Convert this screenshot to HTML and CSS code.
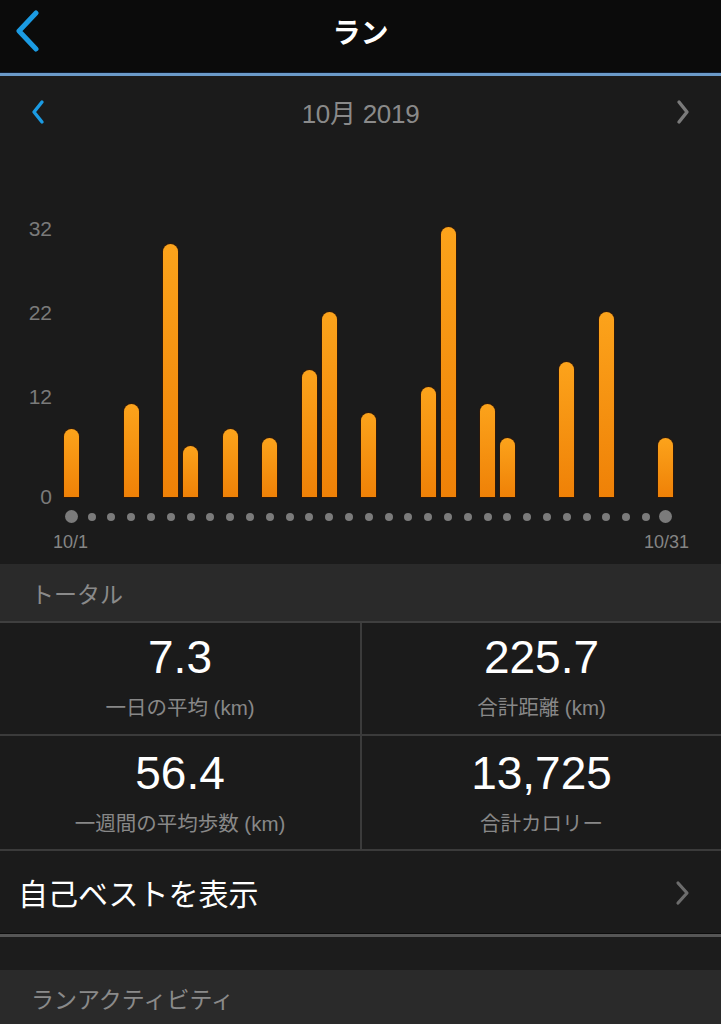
FILE: index.html
```html
<!DOCTYPE html>
<html lang="ja">
<head>
<meta charset="utf-8">
<title>ラン</title>
<link rel="stylesheet" href="styles.css">
</head>
<body>
<div class="app">
  <header class="topbar">
    <svg class="back" width="26" height="42" viewBox="0 0 26 42"><path d="M22 3 L5 21 L22 39" fill="none" stroke="#1b9be3" stroke-width="5" stroke-linecap="round" stroke-linejoin="round"/></svg>
    <h1 class="title">ラン</h1>
  </header>

  <section class="chart-panel">
    <div class="month-nav">
      <svg class="nav-chev" width="16" height="26" viewBox="0 0 16 26"><path d="M12 3 L4 13 L12 23" fill="none" stroke="#1b9be3" stroke-width="3.4" stroke-linecap="round" stroke-linejoin="round"/></svg>
      <span class="month">10月 2019</span>
      <svg class="nav-chev" width="16" height="26" viewBox="0 0 16 26"><path d="M4 3 L12 13 L4 23" fill="none" stroke="#7a7a7a" stroke-width="3.4" stroke-linecap="round" stroke-linejoin="round"/></svg>
    </div>

    <div class="chart">
      <div class="y-axis">
        <span class="y-label" style="bottom:257px">32</span>
        <span class="y-label" style="bottom:173px">22</span>
        <span class="y-label" style="bottom:89px">12</span>
        <span class="y-label" style="bottom:-11px">0</span>
      </div>
      <div class="plot">
        <div class="col"><div class="bar" style="height:68px"></div></div>
        <div class="col"></div>
        <div class="col"></div>
        <div class="col"><div class="bar" style="height:93px"></div></div>
        <div class="col"></div>
        <div class="col"><div class="bar" style="height:253px"></div></div>
        <div class="col"><div class="bar" style="height:51px"></div></div>
        <div class="col"></div>
        <div class="col"><div class="bar" style="height:68px"></div></div>
        <div class="col"></div>
        <div class="col"><div class="bar" style="height:59px"></div></div>
        <div class="col"></div>
        <div class="col"><div class="bar" style="height:127px"></div></div>
        <div class="col"><div class="bar" style="height:185px"></div></div>
        <div class="col"></div>
        <div class="col"><div class="bar" style="height:84px"></div></div>
        <div class="col"></div>
        <div class="col"></div>
        <div class="col"><div class="bar" style="height:110px"></div></div>
        <div class="col"><div class="bar" style="height:270px"></div></div>
        <div class="col"></div>
        <div class="col"><div class="bar" style="height:93px"></div></div>
        <div class="col"><div class="bar" style="height:59px"></div></div>
        <div class="col"></div>
        <div class="col"></div>
        <div class="col"><div class="bar" style="height:135px"></div></div>
        <div class="col"></div>
        <div class="col"><div class="bar" style="height:185px"></div></div>
        <div class="col"></div>
        <div class="col"></div>
        <div class="col"><div class="bar" style="height:59px"></div></div>
      </div>
    </div>

    <div class="dots">
      <span class="dot big"></span><span class="dot"></span><span class="dot"></span><span class="dot"></span><span class="dot"></span><span class="dot"></span><span class="dot"></span><span class="dot"></span><span class="dot"></span><span class="dot"></span><span class="dot"></span><span class="dot"></span><span class="dot"></span><span class="dot"></span><span class="dot"></span><span class="dot"></span><span class="dot"></span><span class="dot"></span><span class="dot"></span><span class="dot"></span><span class="dot"></span><span class="dot"></span><span class="dot"></span><span class="dot"></span><span class="dot"></span><span class="dot"></span><span class="dot"></span><span class="dot"></span><span class="dot"></span><span class="dot"></span><span class="dot big"></span>
    </div>
    <div class="dates">
      <span>10/1</span>
      <span>10/31</span>
    </div>
  </section>

  <div class="section-head">トータル</div>

  <div class="stats">
    <div class="stat">
      <div class="value">7.3</div>
      <div class="label">一日の平均 (km)</div>
    </div>
    <div class="stat">
      <div class="value">225.7</div>
      <div class="label">合計距離 (km)</div>
    </div>
    <div class="stat">
      <div class="value">56.4</div>
      <div class="label">一週間の平均歩数 (km)</div>
    </div>
    <div class="stat">
      <div class="value">13,725</div>
      <div class="label">合計カロリー</div>
    </div>
  </div>

  <div class="link-row">
    <span class="link-text">自己ベストを表示</span>
    <svg class="link-chev" width="18" height="26" viewBox="0 0 18 26"><path d="M5 3 L14 13 L5 23" fill="none" stroke="#6c6c6c" stroke-width="3.2" stroke-linecap="round" stroke-linejoin="round"/></svg>
  </div>

  <div class="spacer"></div>

  <div class="section-head activity">ランアクティビティ</div>
</div>
</body>
</html>
```

FILE: styles.css
```css
* { box-sizing: border-box; }

html, body {
  margin: 0;
  padding: 0;
  background: #1b1b1b;
}

body {
  font-family: "Liberation Sans", "Noto Sans CJK JP", sans-serif;
  color: #fff;
}

.app {
  width: 721px;
  height: 1024px;
  overflow: hidden;
  background: #1b1b1b;
}

/* top bar */
.topbar {
  position: relative;
  height: 76px;
  background: #0b0b0b;
  border-bottom: 3px solid #6b9ac9;
  box-shadow: inset 0 -1px 0 #0e1a2c;
  display: flex;
  align-items: center;
  justify-content: center;
}

.back {
  position: absolute;
  left: 14px;
  top: 10px;
}

.title {
  margin: 0;
  font-family: "Noto Sans CJK JP", sans-serif;
  font-size: 28px;
  font-weight: 700;
  line-height: 1;
  margin-top: -12px;
  color: #fff;
}

/* chart panel */
.chart-panel {
  background: #1b1b1b;
  padding-bottom: 11px;
}

.month-nav {
  height: 74px;
  display: flex;
  align-items: center;
  justify-content: space-between;
  padding: 0 30px 0 30px;
}

.nav-chev {
  margin-top: -2px;
}

.month {
  font-family: "Liberation Sans", "Noto Sans CJK JP", sans-serif;
  font-size: 26px;
  line-height: 30px;
  margin-top: 1px;
  color: #8a8a8a;
  letter-spacing: -0.3px;
}

.chart {
  display: flex;
  height: 347px;
  align-items: flex-end;
}

.y-axis {
  position: relative;
  width: 62px;
  height: 100%;
}

.y-label {
  position: absolute;
  right: 10px;
  font-size: 21px;
  line-height: 22px;
  color: #7a7a7a;
}

.plot {
  display: grid;
  grid-template-columns: repeat(31, 19.8px);
  align-items: end;
  height: 100%;
}

.col {
  display: flex;
  justify-content: center;
  align-items: flex-end;
  height: 100%;
}

.bar {
  width: 15px;
  border-radius: 7.5px 7.5px 0 0;
  background: linear-gradient(to bottom, #fca31b, #ef8107);
  box-shadow: 0 0 0 1px rgba(60, 25, 0, 0.6);
}

.dots {
  display: grid;
  grid-template-columns: repeat(31, 19.8px);
  align-items: center;
  justify-items: center;
  margin-left: 62px;
  margin-top: 13px;
  height: 13px;
}

.dot {
  width: 8px;
  height: 8px;
  border-radius: 50%;
  background: #7b7b7b;
}

.dot.big {
  width: 13px;
  height: 13px;
}

.dates {
  display: flex;
  justify-content: space-between;
  padding: 0 32px 0 53px;
  margin-top: 8px;
  font-size: 18px;
  line-height: 22px;
  color: #858585;
}

/* section headers */
.section-head {
  height: 59px;
  background: #2a2a2a;
  border-bottom: 2px solid #3f3f3f;
  display: flex;
  align-items: center;
  padding-left: 31px;
  font-family: "Noto Sans CJK JP", sans-serif;
  font-size: 23px;
  color: #8a8a8a;
}

.section-head.activity {
  border-bottom: none;
  height: 60px;
  padding-bottom: 4px;
}

/* stats grid */
.stats {
  display: grid;
  grid-template-columns: 362px 359px;
}

.stat {
  display: flex;
  flex-direction: column;
  align-items: center;
  border-bottom: 2px solid #3b3b3b;
  background: #1b1b1b;
  padding-top: 10px;
}

.stat:nth-child(odd) {
  border-right: 2px solid #3b3b3b;
}

.stat:nth-child(1),
.stat:nth-child(2) {
  height: 113px;
}

.stat:nth-child(3),
.stat:nth-child(4) {
  height: 115px;
  padding-top: 13px;
}

.value {
  font-size: 46px;
  line-height: 48px;
  color: #fff;
}

.label {
  margin-top: 14px;
  font-family: "Liberation Sans", "Noto Sans CJK JP", sans-serif;
  font-size: 20.5px;
  line-height: 26px;
  color: #888;
}

/* link row */
.link-row {
  height: 86px;
  display: flex;
  align-items: center;
  justify-content: space-between;
  padding: 0 30px 0 18px;
  border-bottom: 3px solid #555;
  box-shadow: inset 0 -1px 0 #0c0c0c;
}

.link-text {
  font-family: "Noto Sans CJK JP", sans-serif;
  font-size: 30px;
  color: #fff;
  margin-top: -2px;
}

.spacer {
  height: 33px;
  background: #1c1c1c;
}
```
